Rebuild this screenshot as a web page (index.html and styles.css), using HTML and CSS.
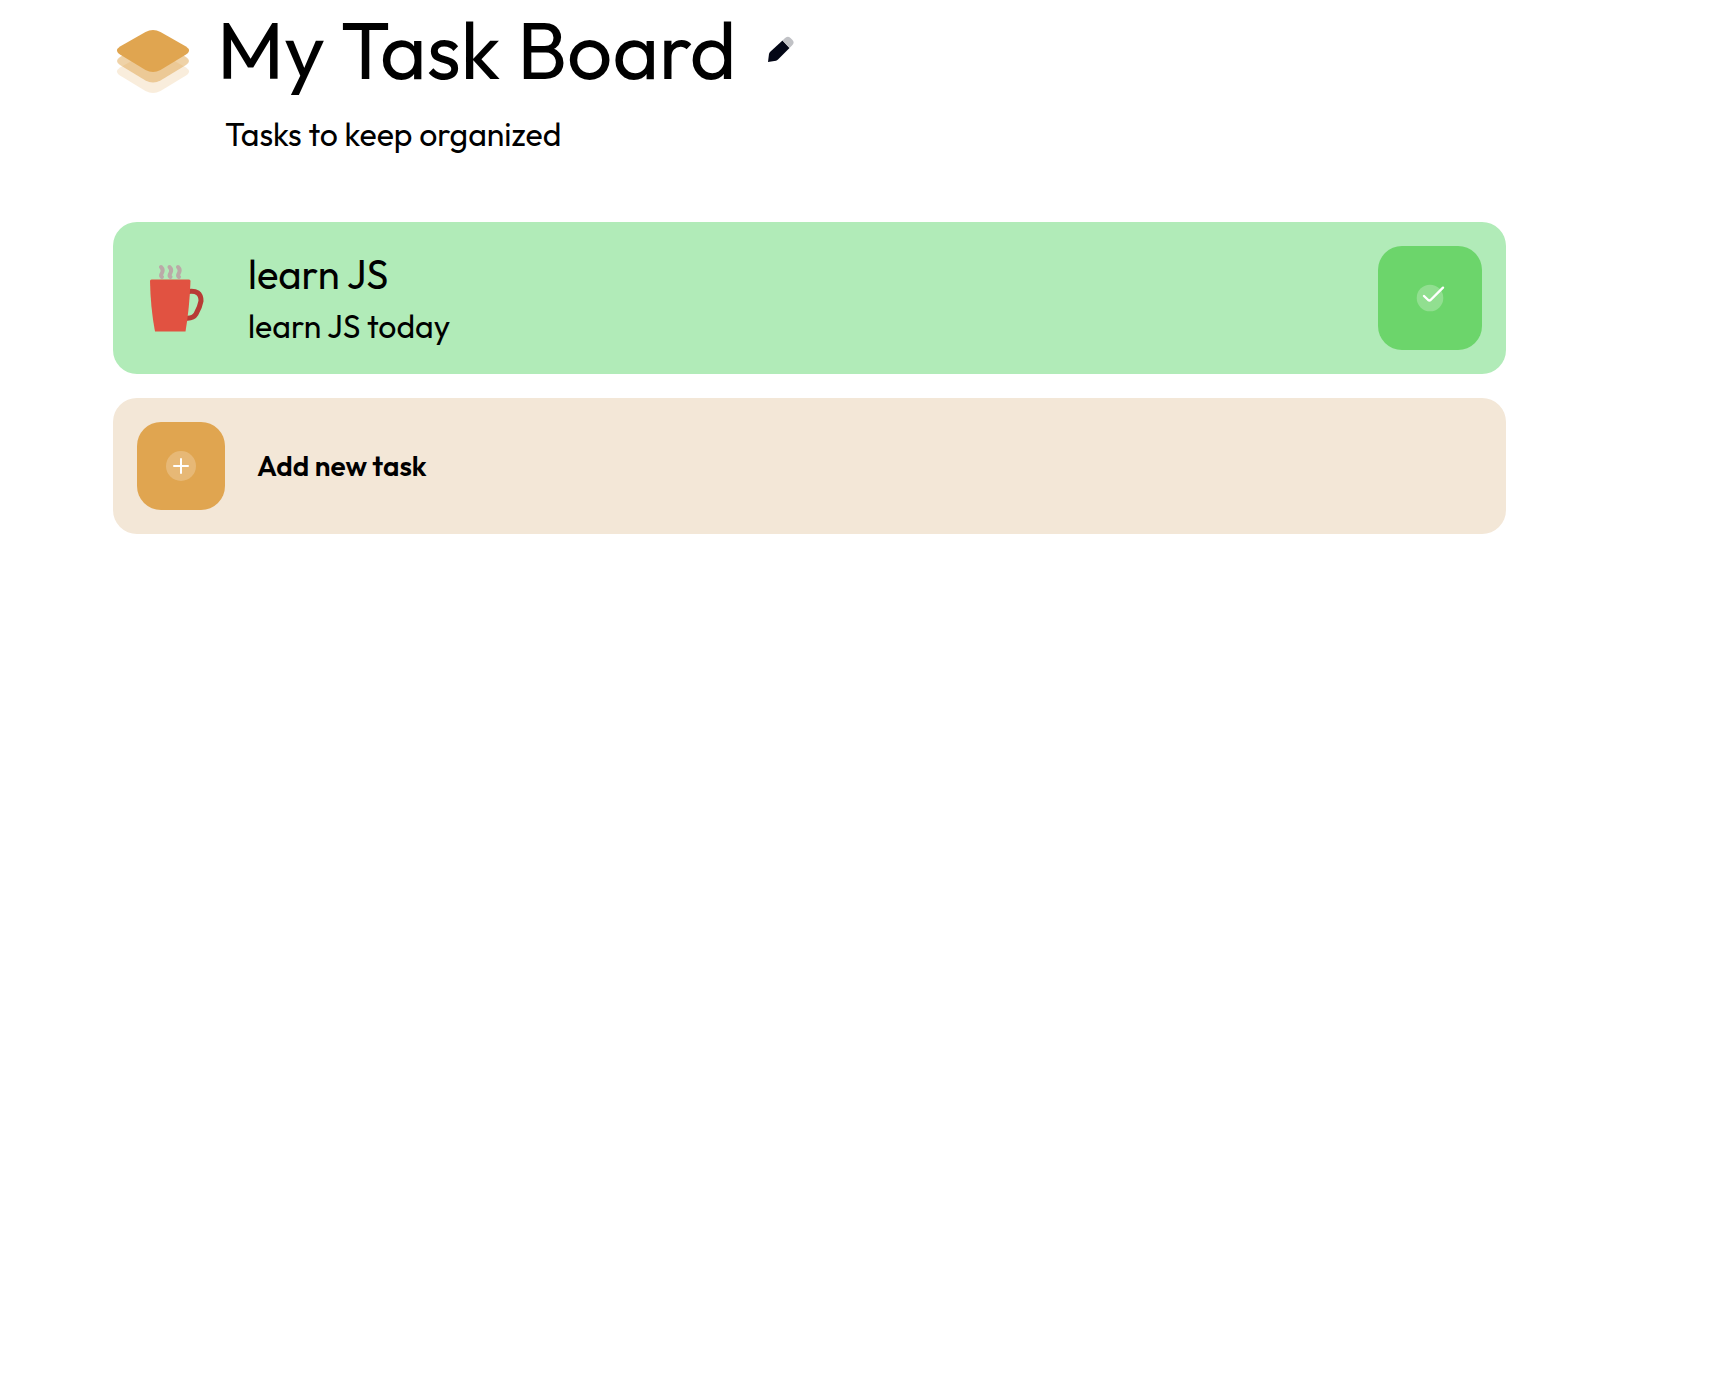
FILE: index.html
```
<!DOCTYPE html>
<html lang="en">
<head>
<meta charset="utf-8">
<meta name="viewport" content="width=device-width, initial-scale=1">
<title>My Task Board</title>
<link rel="stylesheet" href="styles.css">
</head>
<body>
<main class="board">
  <header class="header">
    <div class="title-row">
      <svg class="logo" viewBox="0 0 80 80" aria-hidden="true">
        <g fill="#e0a550">
          <path opacity=".2" d="M32.500 31Q40 27 47.500 31L73 45.500Q79 49.500 73 53.500L47.500 69Q40 73 32.500 69L7 53.500Q1 49.500 7 45.500Z"/>
          <path opacity=".5" d="M32.500 20.500Q40 16.500 47.500 20.500L73 35Q79 39 73 43L47.500 58.500Q40 62.500 32.500 58.500L7 43Q1 39 7 35Z"/>
          <path d="M32.500 10Q40 6 47.500 10L73 24.500Q79 28.500 73 32.500L47.500 48Q40 52 32.500 48L7 32.500Q1 28.500 7 24.500Z"/>
        </g>
      </svg>
      <h1 class="title">My Task Board</h1>
      <button class="edit" type="button" aria-label="Edit board name">
        <svg width="32" height="32" viewBox="0 0 32 32" aria-hidden="true">
          <path fill="#030616" d="M3 29L4 21Q4.200 20 5 19L17.500 7.500L24.500 15L13 26.500Q12 27.500 11 27.700Z"/>
          <path fill="#c0c1c5" d="M17.500 7.500L19.500 5.500Q22.500 2.500 25.500 5L27.500 7Q30 10 27 12.500L24.500 15Z"/>
        </svg>
      </button>
    </div>
    <p class="subtitle">Tasks to keep organized</p>
  </header>
  <section class="tasks" aria-label="Tasks">
    <article class="card card-done">
      <svg class="mug" viewBox="0 0 56 72" aria-hidden="true">
        <path fill="none" stroke="#b83b35" stroke-width="5" d="M39 29.500Q52 27.500 52 39Q51 45 47 52Q44 57 36 56"/>
        <path fill="#e15241" d="M1 19Q1 17.500 2.500 17.500H40Q41.500 17.500 41.500 19Q40.500 46 36.500 69.500H6Q1.500 46 1 19Z"/>
        <g fill="none" stroke="#bba9a7" stroke-width="4" stroke-linecap="round">
          <path d="M12 5Q15 8 12.500 12Q11.500 14 13 15"/>
          <path d="M20.500 5Q23.500 8 21 12Q20 14 21.500 15"/>
          <path d="M29 5Q32 8 29.500 12Q28.500 14 30 15"/>
        </g>
      </svg>
      <div class="task-text">
        <h2 class="task-name">learn JS</h2>
        <p class="task-note">learn JS today</p>
      </div>
      <button class="tile tile-done" type="button" aria-label="Task completed">
        <svg width="40" height="40" viewBox="0 0 40 40" aria-hidden="true">
          <circle cx="20" cy="20" r="13.300" fill="#fff" fill-opacity=".25"/>
          <path fill="none" stroke="#fff" stroke-width="2.400" stroke-linecap="round" stroke-linejoin="round" d="M14 18L18.200 22Q19.400 23 20.600 22L33 9.700"/>
        </svg>
      </button>
    </article>
    <div class="card card-add">
      <button class="tile tile-add" type="button" aria-labelledby="add-label">
        <svg width="40" height="40" viewBox="0 0 40 40" aria-hidden="true">
          <circle cx="20" cy="20" r="15" fill="#fff" fill-opacity=".22"/>
          <path fill="none" stroke="#fff" stroke-width="2" stroke-linecap="round" d="M20 13V27M13 20H27"/>
        </svg>
      </button>
      <span class="add-label" id="add-label">Add new task</span>
    </div>
  </section>
</main>
</body>
</html>
```
FILE: styles.css
```
* {
  box-sizing: border-box;
}

body {
  margin: 0;
  background: #fff;
  color: #000;
  font-family: Outfit, Lato, sans-serif;
  font-weight: 400;
}

h1,
h2,
p {
  margin: 0;
  font-weight: inherit;
}

button {
  border: 0;
  padding: 0;
  cursor: pointer;
}

svg {
  display: block;
  flex: none;
}

.board {
  padding: 0 224px 0 113px;
}

.title-row {
  display: flex;
  align-items: center;
  gap: 24px;
  height: 100px;
}

.logo {
  width: 80px;
  height: 80px;
  margin-top: 24px;
}

.title {
  font-size: 80px;
  line-height: 100px;
}

.edit {
  background: none;
  margin: 0 0 2px 5px;
}

.subtitle {
  padding-left: 112px;
  font-size: 32px;
  line-height: 40px;
  margin-top: 14px;
}

.tasks {
  display: flex;
  flex-direction: column;
  gap: 24px;
  margin-top: 68px;
}

.card {
  display: flex;
  align-items: center;
  padding: 24px;
  border-radius: 24px;
}

.card-done {
  background: #b1ebb8;
}

.card-add {
  gap: 32px;
  background: #f3e7d7;
}

.mug {
  width: 56px;
  height: 72px;
  margin-left: 12px;
}

.task-text {
  flex: 1;
  display: grid;
  gap: 4px;
  padding: 4px 0 0 43px;
}

.task-name {
  font-size: 40px;
  line-height: 48px;
}

.task-note {
  font-size: 32px;
  line-height: 48px;
}

.tile {
  display: grid;
  place-items: center;
  border-radius: 24px;
}

.tile-done {
  width: 104px;
  height: 104px;
  background: #6cd56b;
}

.tile-add {
  width: 88px;
  height: 88px;
  background: #e0a550;
}

.add-label {
  font-size: 28px;
  line-height: 36px;
  font-weight: 600;
}
```
